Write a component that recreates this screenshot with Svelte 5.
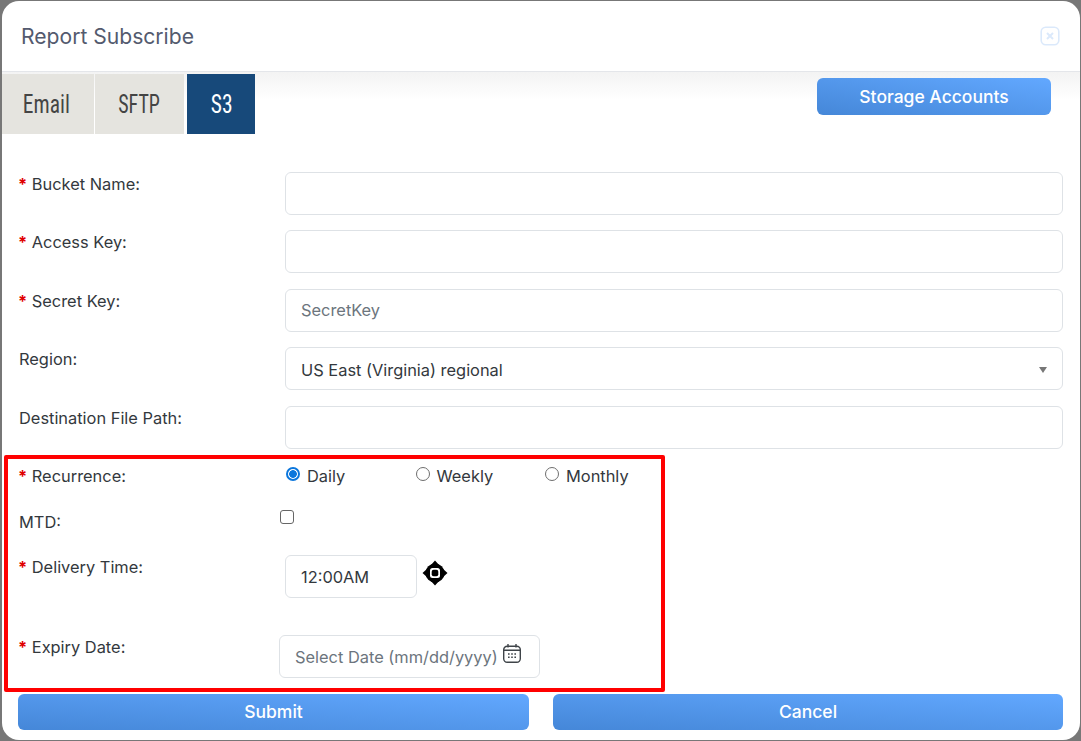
<script>
  const topRows = [
    { label: 'Bucket Name:', req: true, value: '' },
    { label: 'Access Key:', req: true, value: '' },
    { label: 'Secret Key:', req: true, placeholder: 'SecretKey' },
  ];
</script>

<div class="page">
  <div class="modal">
    <header class="head">
      <h1>Report Subscribe</h1>
      <button class="close" aria-label="Close">
        <svg width="20" height="20" viewBox="0 0 20 20" fill="none" stroke="#dbe9fb">
          <rect x="1.2" y="1.2" width="17.6" height="17.6" rx="4.5" stroke-width="1.6" />
          <path d="M7 7l6 6M13 7l-6 6" stroke-width="2" />
        </svg>
      </button>
    </header>

    <div class="tabbar">
      <div class="tabs">
        <div class="tab t1"><span>Email</span></div>
        <div class="tab t2"><span>SFTP</span></div>
        <div class="tab t3 active"><span>S3</span></div>
      </div>
      <button class="btn storage">Storage Accounts</button>
    </div>

    <form class="form">
      {#each topRows as r}
        <div class="row">
          <div class="lab"><span class="star">*</span> {r.label}</div>
          <input class="inp" placeholder={r.placeholder ?? ''} />
        </div>
      {/each}
      <div class="row">
        <div class="lab">Region:</div>
        <div class="inp select">US East (Virginia) regional<span class="caret"></span></div>
      </div>
      <div class="row last">
        <div class="lab">Destination File Path:</div>
        <input class="inp" />
      </div>

      <div class="row rec">
        <div class="lab"><span class="star">*</span> Recurrence:</div>
        <div class="radios">
          <label class="radio"><span class="dot on"></span>Daily</label>
          <label class="radio"><span class="dot"></span>Weekly</label>
          <label class="radio"><span class="dot"></span>Monthly</label>
        </div>
      </div>
      <div class="row mtd">
        <div class="lab">MTD:</div>
        <span class="check"></span>
      </div>
      <div class="row time">
        <div class="lab"><span class="star">*</span> Delivery Time:</div>
        <div class="timewrap">
          <div class="inp timeinp">12:00AM</div>
          <svg class="move" width="26" height="26" viewBox="0 0 26 26">
            <path d="M13 0.5l5 5.5h-10zM13 25.5l-5-5.5h10zM0.5 13l5.5-5v10zM25.5 13l-5.5 5v-10z" fill="#000" />
            <circle cx="13" cy="13" r="9.5" fill="#000" />
            <rect x="8" y="8" width="10" height="10" rx="2.5" fill="#fff" />
            <rect x="9.7" y="9.7" width="6.6" height="6.6" rx="2" fill="#000" />
          </svg>
        </div>
      </div>
      <div class="row expiry">
        <div class="lab"><span class="star">*</span> Expiry Date:</div>
        <div class="inp date">
          <span class="ph">Select Date (mm/dd/yyyy)</span>
          <svg class="cal" width="20" height="21" viewBox="0 0 20 21" fill="none" stroke="#3f4449" stroke-width="1.4">
            <rect x="1.7" y="3.2" width="16.6" height="16" rx="3.5" />
            <path d="M1.7 7.2h16.6M6 1v3.5M14 1v3.5" />
            <path d="M6 11h1.6M9.2 11h1.6M12.4 11h1.6M6 14.2h1.6M9.2 14.2h1.6M12.4 14.2h1.6" stroke-width="1.5" />
          </svg>
        </div>
      </div>

      <div class="actions">
        <button type="button" class="btn">Submit</button>
        <button type="button" class="btn">Cancel</button>
      </div>
      <div class="annot"></div>
    </form>
  </div>
</div>

<style>
  :global(body) {
    margin: 0;
    background: #777;
  }
  .page {
    width: 1081px;
    height: 741px;
    box-sizing: border-box;
    padding: 1px 1px 1px 2px;
    background: #777;
    font-family: Inter, "Liberation Sans", sans-serif;
    color: #33383d;
    font-size: 16.4px;
    overflow: hidden;
  }
  .modal {
    height: 100%;
    background: #fff;
    border-radius: 17px;
    overflow: hidden;
    display: flex;
    flex-direction: column;
    position: relative;
  }
  .head {
    height: 71px;
    flex: none;
    box-sizing: border-box;
    border-bottom: 1px solid #e4e6ea;
    display: flex;
    align-items: center;
    justify-content: space-between;
    padding: 0 20px 0 19px;
  }
  h1 {
    margin: 0;
    font-size: 21.1px;
    font-weight: 400;
    color: #535a6e;
  }
  .close {
    padding: 0;
    border: 0;
    background: none;
    display: block;
    height: 20px;
  }
  .tabbar {
    height: 62px;
    flex: none;
    box-sizing: border-box;
    padding-top: 2px;
    display: flex;
    justify-content: space-between;
    align-items: flex-start;
    background: linear-gradient(#f3f3f3, #fff 28px);
  }
  .tabs {
    display: flex;
    height: 60px;
  }
  .tab {
    display: flex;
    align-items: center;
    justify-content: center;
    background: #e5e4df;
    color: #444;
    font-family: "Liberation Sans Narrow", "Roboto Condensed", Roboto, sans-serif;
    font-size: 25px;
  }
  .tab span {
    display: inline-block;
    transform: scaleX(0.86);
  }
  .t1 { width: 92px; margin-right: 1px; padding-right: 3px; box-sizing: border-box; }
  .t2 { width: 89px; margin-right: 3px; }
  .t2 span { transform: scaleX(0.8); }
  .t3 { width: 68px; padding-left: 2px; box-sizing: border-box; }
  .active { background: #17497a; color: #fff; }
  .btn {
    border: 0;
    border-radius: 6px;
    color: #fff;
    font-family: inherit;
    font-size: 17.5px;
    font-weight: 500;
    background: linear-gradient(to top right, #4587d8, #62a8ff);
    padding: 0 0 1px;
  }
  .storage {
    width: 234px;
    height: 37px;
    padding: 0;
    margin: 4px 29px 0 0;
  }
  .form {
    flex: 1;
    padding: 37.75px 17px 0 17px;
    position: relative;
  }
  .row {
    display: grid;
    grid-template-columns: 266px 1fr;
    align-items: start;
    margin-bottom: 15.5px;
  }
  .row.last { margin-bottom: 0; }
  .lab {
    line-height: 24px;
    color: #33383d;
  }
  .star {
    color: #e00000;
    font-weight: 700;
    margin-left: -1px;
  }
  .inp {
    display: block;
    width: 100%;
    height: 43px;
    box-sizing: border-box;
    border: 1px solid #dee2e6;
    border-radius: 6px;
    padding: 0 15px;
    font: inherit;
    color: #33383d;
    background: #fff;
    outline: none;
  }
  .inp::placeholder { color: #6c757d; opacity: 1; }
  .select {
    line-height: 43px;
    padding-top: 1px;
    position: relative;
  }
  .caret {
    position: absolute;
    right: 15px;
    top: 19px;
    border: 4.5px solid transparent;
    border-top: 6px solid #777;
    border-bottom: 0;
  }
  .rec { margin: 15.25px 0 0; height: 30px; }
  .radios { display: flex; }
  .radio {
    display: flex;
    gap: 7px;
    line-height: 24px;
    width: 129.5px;
  }
  .dot {
    width: 14px;
    height: 14px;
    margin: 3px 0 0 1px;
    border-radius: 50%;
    border: 1px solid #6e6e6e;
    box-sizing: border-box;
  }
  .dot.on {
    border: 2px solid #0b76dc;
    background: radial-gradient(circle, #0b76dc 0 3.5px, #fff 4.2px);
  }
  .mtd { margin: 16px 0 0; height: 45px; }
  .check {
    display: block;
    width: 14px;
    height: 14px;
    box-sizing: border-box;
    margin: 0 0 0 -5px;
    border: 1px solid #666;
    border-radius: 3px;
  }
  .time { margin: 0; height: 80px; }
  .timewrap { display: flex; align-items: flex-start; gap: 5px; }
  .timeinp { width: 132px; line-height: 42px; }
  .move { margin-top: 5px; }
  .expiry { margin: 0; height: 59px; }
  .date {
    width: 261px;
    margin-left: -6px;
    display: flex;
    align-items: center;
    gap: 4px;
    white-space: nowrap;
  }
  .ph { color: #6c757d; }
  .cal { margin-top: -7px; flex: none; }
  .actions {
    display: grid;
    grid-template-columns: 511px 510px;
    gap: 24px;
    margin-left: -1px;
  }
  .actions .btn { height: 36px; }
  .annot {
    position: absolute;
    left: 2px;
    top: 321px;
    width: 653px;
    height: 229px;
    border: 4px solid #f00;
    border-radius: 2px;
    pointer-events: none;
  }
</style>
